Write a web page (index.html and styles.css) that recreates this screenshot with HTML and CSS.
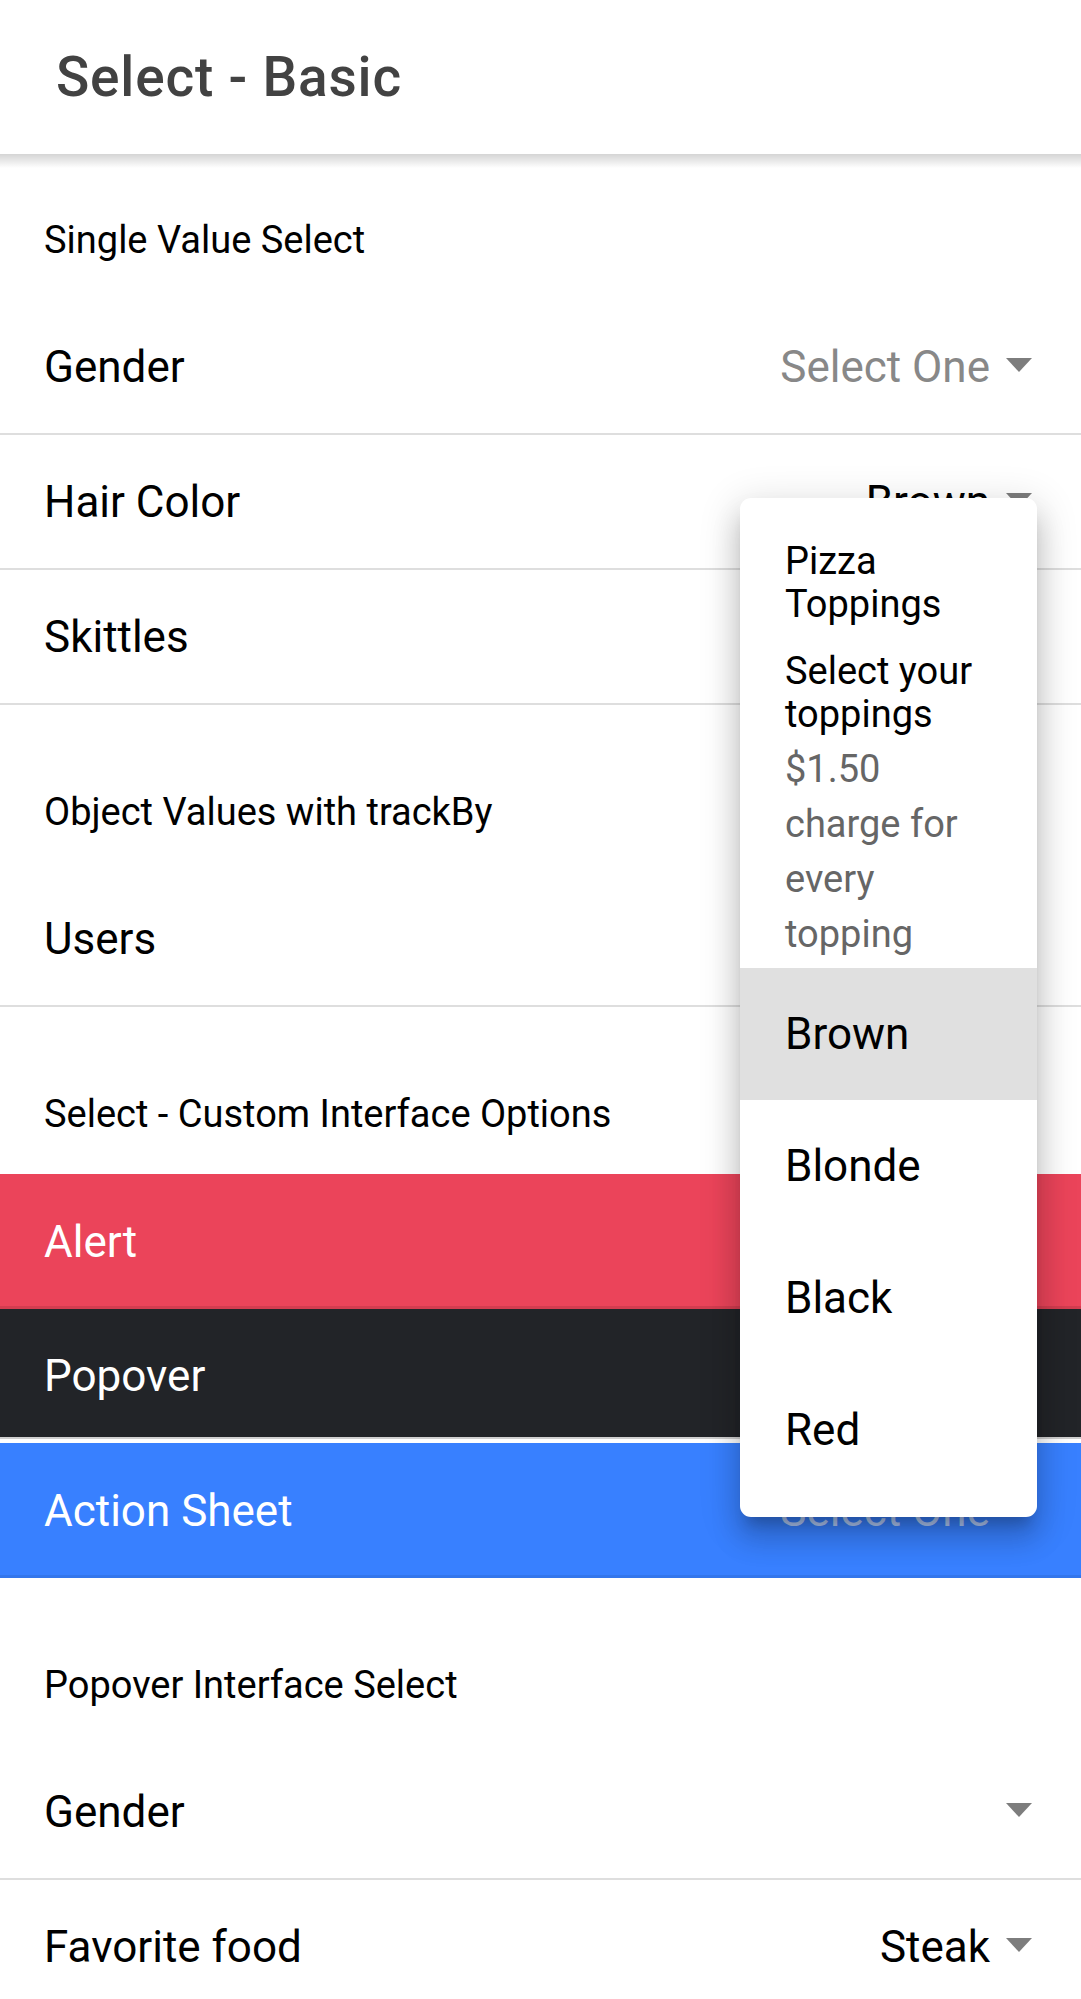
FILE: index.html
```html
<!DOCTYPE html>
<html lang="en">
<head>
<meta charset="utf-8">
<title>Select - Basic</title>
<link rel="stylesheet" href="styles.css">
</head>
<body>
<div class="app">
  <header class="toolbar">
    <h1 class="title">Select - Basic</h1>
  </header>
  <main class="content">
    <section class="list list-first">
      <div class="list-header">Single Value Select</div>
      <div class="item"><span class="label">Gender</span><span class="value placeholder">Select One</span><span class="arrow"></span></div>
      <div class="item"><span class="label">Hair Color</span><span class="value">Brown</span><span class="arrow"></span></div>
      <div class="item"><span class="label">Skittles</span><span class="arrow"></span></div>
    </section>
    <section class="list">
      <div class="list-header">Object Values with trackBy</div>
      <div class="item"><span class="label">Users</span><span class="arrow"></span></div>
    </section>
    <section class="list">
      <div class="list-header">Select - Custom Interface Options</div>
      <div class="item item-danger"><span class="label">Alert</span><span class="arrow"></span></div>
      <div class="item item-dark"><span class="label">Popover</span><span class="arrow"></span></div>
      <div class="item item-primary"><span class="label">Action Sheet</span><span class="value placeholder">Select One</span><span class="arrow"></span></div>
    </section>
    <section class="list">
      <div class="list-header">Popover Interface Select</div>
      <div class="item"><span class="label">Gender</span><span class="arrow"></span></div>
      <div class="item"><span class="label">Favorite food</span><span class="value">Steak</span><span class="arrow"></span></div>
    </section>
  </main>

  <div class="popover">
    <div class="pop-head">
      <div class="pop-title">Pizza Toppings</div>
      <div class="pop-sub">Select your toppings</div>
      <div class="pop-msg">$1.50 charge for every topping</div>
    </div>
    <div class="pop-options">
      <div class="pop-option selected">Brown</div>
      <div class="pop-option">Blonde</div>
      <div class="pop-option">Black</div>
      <div class="pop-option">Red</div>
    </div>
  </div>
</div>
</body>
</html>
```

FILE: styles.css
```css
html, body {
  margin: 0;
  padding: 0;
  overflow: hidden;
  background: #fff;
}

body {
  font-family: Roboto, "Noto Sans", "Liberation Sans", sans-serif;
  color: #000;
}

.app {
  position: relative;
  width: 1081px;
  height: 1999px;
  overflow: hidden;
}

/* Toolbar */
.toolbar {
  position: relative;
  z-index: 2;
  height: 154px;
  box-sizing: border-box;
  display: flex;
  align-items: center;
  padding-left: 56px;
  background: #fff;
}

.toolbar::after {
  content: "";
  position: absolute;
  left: 0;
  right: 0;
  top: 100%;
  height: 14px;
  background: linear-gradient(rgba(0, 0, 0, 0.17), rgba(0, 0, 0, 0));
}

.title {
  margin: 0;
  font-size: 55px;
  font-weight: 500;
  letter-spacing: 0.8px;
  color: #424242;
}

/* Lists */
.list {
  margin-top: 43px;
}

.list-first {
  margin-top: 22px;
}

.list-header {
  height: 124px;
  box-sizing: border-box;
  display: flex;
  align-items: flex-end;
  padding: 0 44px 38px 44px;
  font-size: 38px;
  line-height: 44px;
  color: #000;
}

.item {
  height: 135px;
  box-sizing: border-box;
  display: flex;
  align-items: center;
  padding: 0 49px 0 44px;
  border-bottom: 2px solid #dedede;
  font-size: 44px;
  color: #000;
}

.label {
  flex: 1;
  white-space: nowrap;
}

.value {
  color: #000;
  white-space: nowrap;
}

.placeholder {
  color: #888;
}

.arrow {
  width: 0;
  height: 0;
  margin-left: 16px;
  margin-top: -3px;
  border-left: 13px solid transparent;
  border-right: 13px solid transparent;
  border-top: 14px solid #7d7d7d;
}

/* Coloured items */
.item-danger {
  border-bottom: none;
  background: #eb445a;
  color: #fff;
  box-shadow: inset 0 -3px 0 rgba(0, 0, 0, 0.1);
}

.item-dark {
  height: 134px;
  border-bottom: none;
  background: #222428;
  color: #fff;
  box-shadow: inset 0 -4px 0 #fff, inset 0 -6px 0 #d0d0d0;
}

.item-primary {
  border-bottom: none;
  background: #3880ff;
  color: #fff;
  box-shadow: inset 0 -3px 0 rgba(0, 0, 0, 0.08);
}

.item-primary .placeholder {
  color: rgba(235, 240, 250, 0.7);
}

.item-danger .arrow,
.item-dark .arrow,
.item-primary .arrow {
  border-top-color: rgba(255, 255, 255, 0.6);
}

/* Popover */
.popover {
  position: absolute;
  z-index: 10;
  left: 740px;
  top: 498px;
  width: 297px;
  box-sizing: border-box;
  padding: 42px 0 21px 0;
  background: #fff;
  border-radius: 11px;
  box-shadow:
    0 14px 14px -8px rgba(0, 0, 0, 0.2),
    0 22px 28px 3px rgba(0, 0, 0, 0.14),
    0 8px 38px 6px rgba(0, 0, 0, 0.12);
}

.pop-head {
  padding: 0 44px 0 45px;
}

.pop-title {
  font-size: 38px;
  line-height: 43px;
  color: #000;
}

.pop-sub {
  margin-top: 24px;
  font-size: 38px;
  line-height: 43px;
  color: #000;
}

.pop-msg {
  margin-top: 6px;
  font-size: 38px;
  line-height: 55px;
  color: #666;
}

.pop-options {
  margin-top: 6px;
}

.pop-option {
  height: 132px;
  display: flex;
  align-items: center;
  padding-left: 45px;
  font-size: 44px;
  color: #000;
}

.pop-option.selected {
  background: #e0e0e0;
}
```
